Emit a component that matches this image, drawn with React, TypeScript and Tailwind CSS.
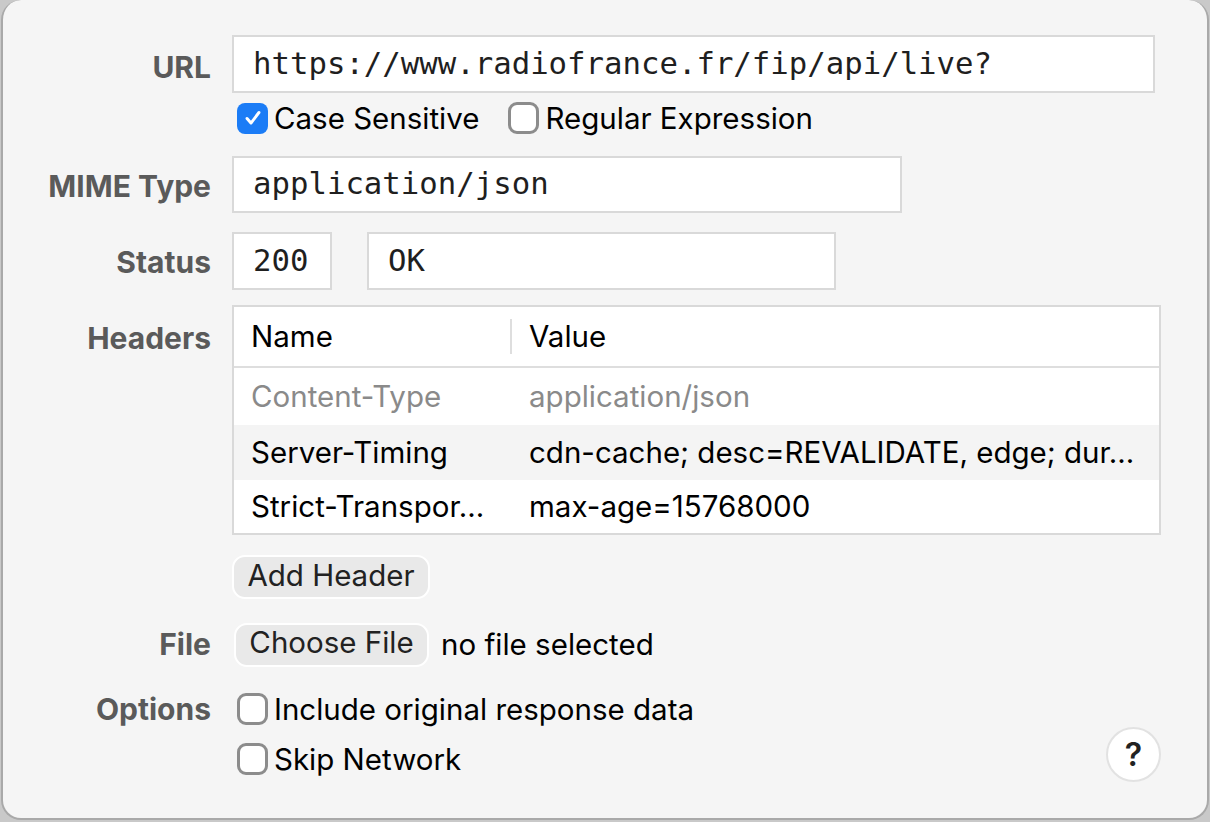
import React from "react"

const sans = "font-['Inter','Noto_Sans',sans-serif]"
const mono = "font-['DejaVu_Sans_Mono','Liberation_Mono',monospace]"
const label = `text-right text-[30px] font-bold text-[#5a5a5a] ${sans}`
const input = `flex items-center border-2 border-[#d9d9d9] bg-white pl-[19px] text-[30.7px] text-[#1f1f1f] ${mono}`
const pill = "flex h-[44px] items-center justify-center rounded-[13px] border-2 border-white bg-[#e9e9e9] pb-[3px] leading-none text-[#222]"

function Checkbox({ checked = false }: { checked?: boolean }) {
  if (checked) {
    return (
      <span className="flex size-[31px] shrink-0 items-center justify-center rounded-[8px] bg-[#1b7cf6]">
        <svg viewBox="0 0 24 24" className="size-[22px]" fill="none" stroke="white" strokeWidth="3.2" strokeLinecap="round" strokeLinejoin="round">
          <path d="M5.5 12.5l4.3 5L18.5 6" />
        </svg>
      </span>
    )
  }
  return <span className="block h-[32px] w-[31px] shrink-0 rounded-[9px] border-[3px] border-[#8c8c8c] bg-white" />
}

function Option({ checked, text }: { checked?: boolean; text: string }) {
  return (
    <label className={`flex items-center gap-[6px] text-[29.5px] text-black ${sans}`}>
      <Checkbox checked={checked} />
      <span>{text}</span>
    </label>
  )
}

const rows = [
  { name: "Content-Type", value: "application/json", muted: true, h: "h-[57px]", bg: "bg-white" },
  { name: "Server-Timing", value: "cdn-cache; desc=REVALIDATE, edge; dur…", h: "h-[55px]", bg: "bg-[#f4f4f4]" },
  { name: "Strict-Transpor…", value: "max-age=15768000", h: "h-[53px]", bg: "bg-white" },
]

export default function App() {
  return (
    <div className="h-[822px] w-[1210px] overflow-hidden bg-[#c9c9c9]">
      <div className="ml-[1px] h-[820px] w-[1208px] rounded-[20px] border-x-2 border-b-2 border-[#a9a9a9] bg-[#f5f5f5] pt-[35px]">
        <div className="grid grid-cols-[208px_1fr] items-center gap-x-[21px]">
          {/* URL */}
          <div className={`${label} pt-[6px]`}>URL</div>
          <div className={`${input} h-[58px] w-[923px]`}>https://www.radiofrance.fr/fip/api/live?</div>

          <div />
          <div className="mt-[10px] flex h-[30px] items-center gap-[29px] pl-[5px]">
            <Option checked text="Case Sensitive" />
            <Option text="Regular Expression" />
          </div>

          {/* MIME */}
          <div className={`${label} mt-[23px] pt-[4px]`}>MIME Type</div>
          <div className={`${input} mt-[23px] h-[57px] w-[670px]`}>application/json</div>

          {/* Status */}
          <div className={`${label} mt-[19px] pt-[2px]`}>Status</div>
          <div className="mt-[19px] flex gap-[35px]">
            <div className={`${input} h-[58px] w-[100px]`}>200</div>
            <div className={`${input} h-[58px] w-[469px]`}>OK</div>
          </div>

          {/* Headers */}
          <div className={`${label} mt-[15px] self-start pt-[11px]`}>Headers</div>
          <div className={`mt-[15px] w-[929px] border-2 border-[#d9d9d9] bg-white text-[29.5px] ${sans}`}>
            <div className="flex h-[61px] items-center border-b-2 border-[#dedede] text-black">
              <div className="w-[276px] pl-[17px]">Name</div>
              <div className="h-[35px] w-[2px] bg-[#dedede]" />
              <div className="pl-[17px]">Value</div>
            </div>
            {rows.map((r) => (
              <div key={r.name} className={`flex items-center ${r.h} ${r.bg} ${r.muted ? "text-[#8a8a8a]" : "text-black"}`}>
                <div className="w-[278px] whitespace-nowrap pl-[17px]">{r.name}</div>
                <div className="whitespace-nowrap pl-[17px]">{r.value}</div>
              </div>
            ))}
          </div>

          {/* Add header */}
          <div />
          <div className="mt-[20px]">
            <button className={`${pill} w-[198px] text-[29.5px] ${sans}`}>Add Header</button>
          </div>

          {/* File */}
          <div className={`${label} mt-[23px]`}>File</div>
          <div className={`mt-[23px] flex items-center gap-[12px] text-[29.5px] text-black ${sans}`}>
            <button className={`${pill} ml-[2px] w-[195px]`}>Choose File</button>
            <span>no file selected</span>
          </div>

          {/* Options */}
          <div className={`${label} mt-[20px] self-start`}>Options</div>
          <div className="mt-[20px] flex w-[929px] items-start justify-between">
            <div className="flex flex-col gap-[6px] pl-[5px]">
              <Option text="Include original response data" />
              <Option text="Skip Network" />
            </div>
            <button className={`mt-[40px] flex size-[55px] items-center justify-center rounded-full border-2 border-[#e2e2e2] bg-white text-[32px] font-semibold text-[#222] ${sans}`}>
              ?
            </button>
          </div>
        </div>
      </div>
    </div>
  )
}
